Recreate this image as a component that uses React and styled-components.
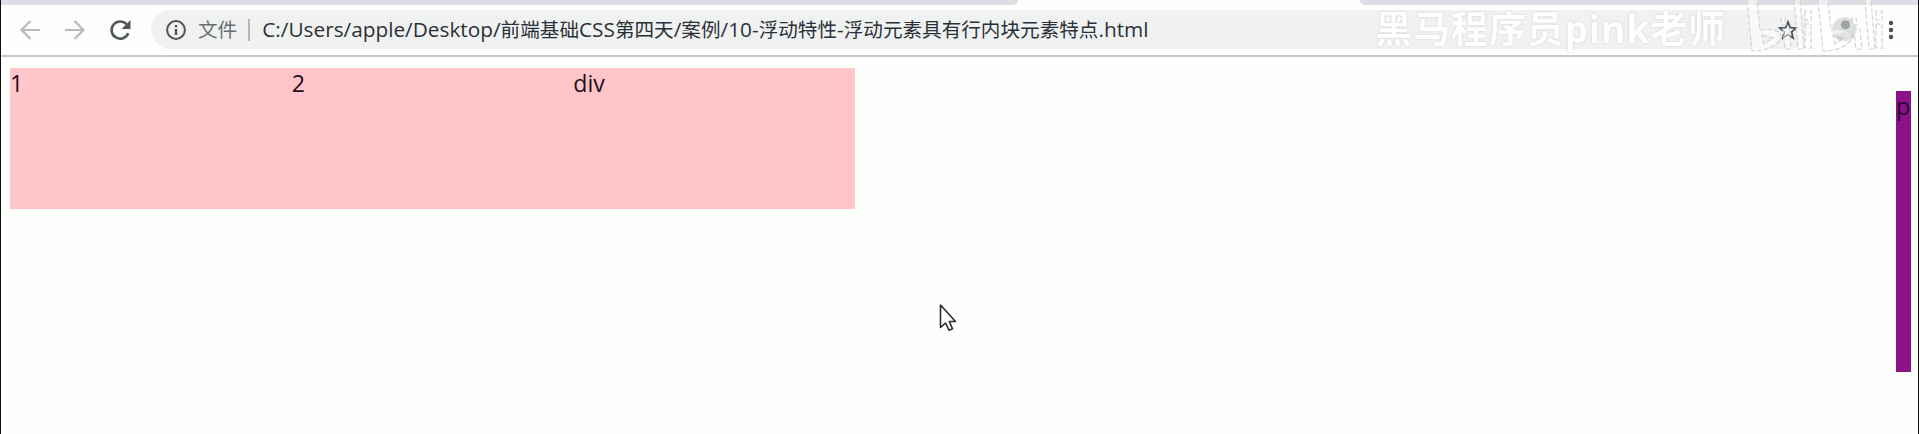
import React from 'react';
import styled, { createGlobalStyle } from 'styled-components';

const Global = createGlobalStyle`
  * { box-sizing: border-box; }
  html, body { margin: 0; }
  body { background: #fdfffd; overflow: hidden; font-family: "Open Sans", "Noto Sans CJK SC", sans-serif; }
`;

const Frame = styled.div`
  position: relative;
  width: 1919px;
  height: 434px;
  border-left: 1px solid #111;
  border-right: 1px solid #111;
  background: #fdfffd;
  overflow: hidden;
`;

const TabStrip = styled.div`
  display: flex;
  justify-content: space-between;
  height: 5px;
`;

const InactiveTabs = styled.div`
  width: ${(p) => p.$width}px;
  background: #dcdee4;
  border-radius: ${(p) => (p.$side === 'left' ? '0 0 7px 0' : '0 0 0 7px')};
`;

const Toolbar = styled.div`
  display: flex;
  align-items: center;
  height: 52px;
  padding: 0 14px 1px 15px;
  border-bottom: 2px solid #c6c8c8;
`;

const IconButton = styled.span`
  display: flex;
  justify-content: center;
  width: 28px;
  margin-right: ${(p) => p.$gap}px;
  color: ${(p) => p.$color};
`;

const Omnibox = styled.div`
  display: flex;
  align-items: center;
  width: 1659px;
  height: 39px;
  padding: 0 12px 0 15px;
  border-radius: 20px;
  background: #f0f2f2;
`;

const Scheme = styled.span`
  margin-left: 12px;
  font-size: 19.6px;
  line-height: 30px;
  color: #6a6e73;
`;

const Separator = styled.span`
  width: 2px;
  height: 22px;
  margin: 0 12px 0 11px;
  background: #b4b7ba;
`;

const Address = styled.span`
  flex: 1;
  white-space: nowrap;
  font-size: 19.6px;
  line-height: 30px;
  color: #2b3038;
`;

const Latin = styled.span`
  font-size: 20.8px;
`;

const Avatar = styled.span`
  display: flex;
  margin-left: 22px;
`;

const Page = styled.div`
  display: flex;
  justify-content: space-between;
  padding: 11px 7px 0 9px;
`;

const FloatRow = styled.div`
  display: flex;
`;

const FloatBox = styled.div`
  width: 281.67px;
  height: 141px;
  background: #ffc5c9;
  font-size: 23.2px;
  line-height: 31px;
  color: #24101c;
`;

const Paragraph = styled.div`
  width: 15px;
  height: 281px;
  margin-top: 23px;
  background: #8d1289;
  font-size: 23.2px;
  line-height: 31px;
  color: #280632;
`;

const Watermark = styled.div`
  position: absolute;
  top: 9px;
  left: 1374px;
  display: flex;
  font-size: 37px;
  font-weight: 700;
  line-height: 40px;
  letter-spacing: 0.9px;
  white-space: nowrap;
  color: #fff;
  text-shadow: 0 0 1px #cdcfcf, 0 0 2px #d4d6d6;
`;

const LogoMark = styled.svg`
  position: absolute;
  top: 0;
  left: 1742px;
`;

const Pointer = styled.svg`
  position: absolute;
  top: 303px;
  left: 935px;
`;

const BackIcon = () => (
  <svg width="22" height="22" viewBox="0 0 22 22" fill="none" stroke="currentColor" strokeWidth="2.2">
    <path d="M21 11H3M11.500 2 2.500 11l9 9" />
  </svg>
);

const ForwardIcon = () => (
  <svg width="22" height="22" viewBox="0 0 22 22" fill="none" stroke="currentColor" strokeWidth="2.2">
    <path d="M1 11h18M10.500 2l9 9-9 9" />
  </svg>
);

const ReloadIcon = () => (
  <svg width="22" height="22" viewBox="0 0 22 22">
    <path d="M19.200 14.200A8.600 8.600 0 1 1 17.500 5.200" fill="none" stroke="currentColor" strokeWidth="2.600" />
    <path d="M21.500 1v9h-9z" fill="currentColor" />
  </svg>
);

const InfoIcon = () => (
  <svg width="20" height="20" viewBox="0 0 20 20">
    <circle cx="10" cy="10" r="8.900" fill="none" stroke="#50545a" strokeWidth="2" />
    <path d="M8.800 5h2.400v2.200H8.800zM8.800 9h2.400v6H8.800z" fill="#50545a" />
  </svg>
);

const StarIcon = () => (
  <svg width="20" height="20" viewBox="0 0 20 20">
    <path d="M10 2l2.200 5.600 6 .4-4.600 3.900 1.500 6L10 14.600 4.900 17.900l1.500-6L1.800 8l6-.4z" fill="#fff" stroke="#4c5058" strokeWidth="1.800" />
  </svg>
);

const AvatarIcon = () => (
  <svg width="25" height="26" viewBox="0 0 25 26">
    <circle cx="12.500" cy="12.500" r="12.300" fill="#dddfdf" />
    <circle cx="13.500" cy="7.800" r="4.600" fill="#a0a3a4" />
    <path d="M4 19c4-5 14-5 18 0-4 6-14 6-18 0z" fill="#c4c6c6" />
  </svg>
);

const MenuIcon = () => (
  <svg width="6" height="20" viewBox="0 0 6 20" fill="#4c4f53">
    <circle cx="3" cy="3" r="2.200" />
    <circle cx="3" cy="10" r="2.200" />
    <circle cx="3" cy="17" r="2.200" />
  </svg>
);

const MenuButton = styled.span`
  display: flex;
  margin-left: 31px;
`;

const logoHalf = 'M4 0 9 51c14 1 29-8 29-14 0-7-11-9-21-7L14 0M19 35l11 3-9 6zM40 29l2 20h6l-2-20zM38 18l1 7h4l-1-7zM51 0l4 49h6L57 0M62 24v24h6V24zM62 11v9h6v-9z';

export default function App() {
  return (
    <>
      <Global />
      <Frame>
        <TabStrip>
          <InactiveTabs $width={1017} $side="left" />
          <InactiveTabs $width={558} $side="right" />
        </TabStrip>
        <Toolbar>
          <IconButton $gap={17} $color="#b9bbbb"><BackIcon /></IconButton>
          <IconButton $gap={17} $color="#b9bbbb"><ForwardIcon /></IconButton>
          <IconButton $gap={17} $color="#54575a"><ReloadIcon /></IconButton>
          <Omnibox>
            <InfoIcon />
            <Scheme>文件</Scheme>
            <Separator />
            <Address>
              <Latin>C:/Users/apple/Desktop/</Latin>前端基础<Latin>CSS</Latin>第四天<Latin>/</Latin>案例<Latin>/10-</Latin>浮动特性<Latin>-</Latin>浮动元素具有行内块元素特点<Latin>.html</Latin>
            </Address>
            <StarIcon />
          </Omnibox>
          <Avatar><AvatarIcon /></Avatar>
          <MenuButton><MenuIcon /></MenuButton>
        </Toolbar>
        <Page>
          <FloatRow>
            <FloatBox>1</FloatBox>
            <FloatBox>2</FloatBox>
            <FloatBox>div</FloatBox>
          </FloatRow>
          <Paragraph>p</Paragraph>
        </Page>
        <Watermark>黑马程序员pink老师</Watermark>
        <LogoMark width="150" height="54" viewBox="0 0 150 54" fill="#fff" fillOpacity="0.5" stroke="#d2d4d4" strokeWidth="1.200" strokeDasharray="5 2">
          <path d={logoHalf} />
          <path d={logoHalf} transform="translate(71 0)" />
        </LogoMark>
        <Pointer width="22" height="32" viewBox="0 0 22 32">
          <path d="M4.500 2v22.500l5-4.500 3.500 7.200 3.500-1.500-3.200-7.200H19.500z" fill="#fff" stroke="#2c2c30" strokeWidth="1.600" strokeLinejoin="round" />
        </Pointer>
      </Frame>
    </>
  );
}
